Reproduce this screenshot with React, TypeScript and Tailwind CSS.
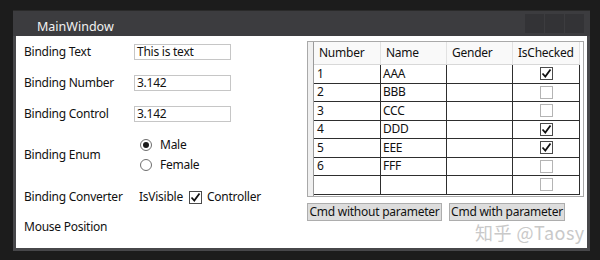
import React from 'react';

const font = { fontFamily: '"Noto Sans", "Open Sans", sans-serif' };

function Check({ on, light }: { on: boolean; light?: boolean }) {
  return (
    <div
      className={`w-[13px] h-[13px] border bg-white flex items-center justify-center ${
        on ? 'border-[#4a4a4a]' : light ? 'border-[#b4b4b4]' : 'border-[#a0a0a0]'
      }`}
    >
      {on && (
        <svg width="11" height="11" viewBox="0 0 11 11">
          <path d="M1.5 5.5 L4.3 8.5 L9.5 1.5" fill="none" stroke="#111" strokeWidth="1.8" />
        </svg>
      )}
    </div>
  );
}

function Radio({ on, label }: { on: boolean; label: string }) {
  return (
    <div className="flex items-center h-[20px] gap-[8px]">
      <div className="w-[12px] h-[12px] rounded-full border border-[#6e6e6e] bg-white flex items-center justify-center">
        {on && <div className="w-[6px] h-[6px] rounded-full bg-[#1a1a1a]" />}
      </div>
      <span>{label}</span>
    </div>
  );
}

function TextBox({ value }: { value: string }) {
  return (
    <div className="w-[97px] h-[16px] border border-[#c6c6c6] bg-white flex items-center px-[2px] leading-none">
      {value}
    </div>
  );
}

const rows = [
  { n: '1', name: 'AAA', c: true },
  { n: '2', name: 'BBB', c: false },
  { n: '3', name: 'CCC', c: false },
  { n: '4', name: 'DDD', c: true },
  { n: '5', name: 'EEE', c: true },
  { n: '6', name: 'FFF', c: false },
  { n: '', name: '', c: false },
];

const widths = ['w-[67px]', 'w-[66px]', 'w-[66px]', 'w-[67px]'];

export default function App() {
  return (
    <div
      className="w-[600px] h-[260px] bg-[#1c1c1c] pl-[13px] pt-[10px] text-[12px] tracking-[-0.25px] text-[#111]"
      style={font}
    >
      <div className="relative w-[577px] h-[241px] bg-[#47474a] flex flex-col">
        {/* Title bar */}
        <div className="h-[26px] flex bg-[#3c3c3f] pl-[24px] pr-[6px] border-t border-[#2a2a2a]">
          <span className="text-[#f2f2f2] text-[12.5px] tracking-normal mt-[7px] leading-[17px]">MainWindow</span>
          <div className="ml-auto flex gap-[1px] mt-[3px]">
            <div className="w-[19px] h-[19px] bg-[#333336]" />
            <div className="w-[19px] h-[19px] bg-[#333336]" />
            <div className="w-[19px] h-[19px] bg-[#333336]" />
          </div>
        </div>

        {/* Content */}
        <div className="mx-[3px] mb-[3px] flex-1 bg-white flex">
          <div className="w-[291px] pl-[8px] flex flex-col">
            <div className="flex items-center h-[16px] mt-[8px]">
              <div className="w-[110px]">Binding Text</div>
              <TextBox value="This is text" />
            </div>
            <div className="flex items-center h-[16px] mt-[15px]">
              <div className="w-[110px]">Binding Number</div>
              <TextBox value="3.142" />
            </div>
            <div className="flex items-center h-[16px] mt-[15px]">
              <div className="w-[110px]">Binding Control</div>
              <TextBox value="3.142" />
            </div>
            <div className="flex items-center h-[40px] mt-[13px]">
              <div className="w-[116px]">Binding Enum</div>
              <div className="flex flex-col">
                <Radio on label="Male" />
                <Radio on={false} label="Female" />
              </div>
            </div>
            <div className="flex items-center h-[18px] mt-[13px]">
              <div className="w-[115px]">Binding Converter</div>
              <span>IsVisible</span>
              <div className="ml-[6px] mr-[5px]">
                <Check on />
              </div>
              <span>Controller</span>
            </div>
            <div className="flex items-center h-[18px] mt-[12px]">
              <div>Mouse Position</div>
            </div>
          </div>

          <div className="flex flex-col pt-[5px]">
            {/* DataGrid */}
            <div className="w-[277px] border border-[#a9a9a9] bg-white flex">
              <div className="w-[6px] bg-[#f0f0f0] border-r border-[#9a9a9a]" />
              <div className="flex flex-col">
                <div className="flex h-[23px] bg-[#f9f9f9] border-b border-[#d8d8d8]">
                  {['Number', 'Name', 'Gender', 'IsChecked'].map((h, i) => (
                    <div key={h} className={`${widths[i]} pl-[5px] flex items-center border-r border-[#e2e2e2]`}>
                      {h}
                    </div>
                  ))}
                </div>
                {rows.map((r, i) => (
                  <div key={i} className="flex h-[18.5px] border-b border-[#2e2e2e]">
                    <div className="w-[67px] pl-[3px] flex items-center border-r border-[#2e2e2e]">{r.n}</div>
                    <div className="w-[66px] pl-[2px] flex items-center border-r border-[#2e2e2e]">{r.name}</div>
                    <div className="w-[66px] border-r border-[#2e2e2e]" />
                    <div className="w-[67px] flex items-center justify-center border-r border-[#2e2e2e]">
                      <Check on={r.c} light />
                    </div>
                  </div>
                ))}
                <div className="h-[1px]" />
              </div>
            </div>

            {/* Buttons */}
            <div className="flex gap-[7px] mt-[6px]">
              <button className="w-[135px] h-[18px] bg-[#dddddd] border border-[#adadad] leading-none whitespace-nowrap text-center">
                Cmd without parameter
              </button>
              <button className="w-[116px] h-[18px] bg-[#dddddd] border border-[#adadad] leading-none whitespace-nowrap text-center">
                Cmd with parameter
              </button>
            </div>
          </div>
        </div>

        {/* watermark */}
        <div
          className="absolute left-[462px] top-[213px] text-[18px] leading-none tracking-[0.5px] text-[#c9c9c9] whitespace-nowrap"
          style={{ fontFamily: '"Noto Sans CJK SC", "Noto Sans", sans-serif' }}
        >
          知乎 @Taosy
        </div>
      </div>
    </div>
  );
}
